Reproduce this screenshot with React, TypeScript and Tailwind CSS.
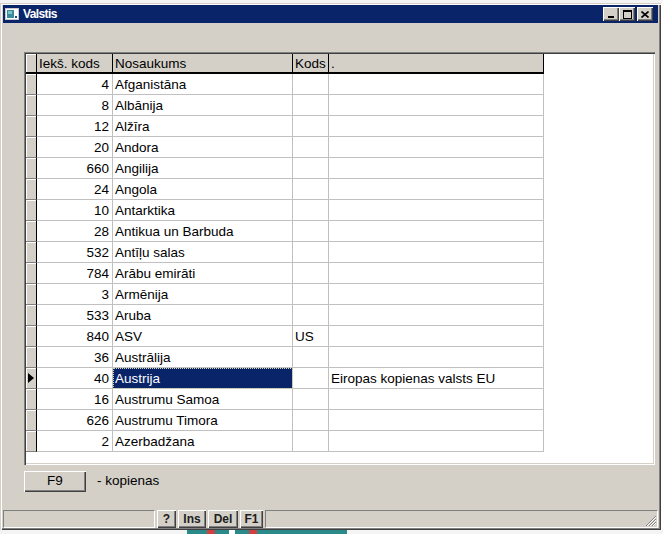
import React from 'react';

type Row = { id: string; name: string; code: string; note: string };

const rows: Row[] = [
  { id: '4', name: 'Afganistāna', code: '', note: '' },
  { id: '8', name: 'Albānija', code: '', note: '' },
  { id: '12', name: 'Alžīra', code: '', note: '' },
  { id: '20', name: 'Andora', code: '', note: '' },
  { id: '660', name: 'Angilija', code: '', note: '' },
  { id: '24', name: 'Angola', code: '', note: '' },
  { id: '10', name: 'Antarktika', code: '', note: '' },
  { id: '28', name: 'Antikua un Barbuda', code: '', note: '' },
  { id: '532', name: 'Antīļu salas', code: '', note: '' },
  { id: '784', name: 'Arābu emirāti', code: '', note: '' },
  { id: '3', name: 'Armēnija', code: '', note: '' },
  { id: '533', name: 'Aruba', code: '', note: '' },
  { id: '840', name: 'ASV', code: 'US', note: '' },
  { id: '36', name: 'Austrālija', code: '', note: '' },
  { id: '40', name: 'Austrija', code: '', note: 'Eiropas kopienas valsts EU' },
  { id: '16', name: 'Austrumu Samoa', code: '', note: '' },
  { id: '626', name: 'Austrumu Timora', code: '', note: '' },
  { id: '2', name: 'Azerbadžana', code: '', note: '' },
];

const SELECTED = 14;

const raised =
  'bg-[#d4d0c8] shadow-[inset_1px_1px_0_#ffffff,inset_-1px_-1px_0_#404040,inset_-2px_-2px_0_#808080]';

function TitleButton({ children, className = '' }: { children: React.ReactNode; className?: string }) {
  return (
    <div className={`w-[16px] h-[14px] flex items-center justify-center ${raised} ${className}`}>
      {children}
    </div>
  );
}

function StatusButton({ label, w }: { label: string; w: string }) {
  return (
    <div className={`${w} h-[18px] flex items-center justify-center text-[12px] font-bold text-[#202020] ${raised}`}>
      {label}
    </div>
  );
}

export default function App() {
  return (
    <div className="w-[663px] h-[534px] overflow-hidden bg-white font-['Liberation_Sans',Arial,sans-serif] text-[13.5px] text-black flex flex-col">
      {/* desktop behind the window */}
      <div className="h-[3px] shrink-0 bg-[#f4f4f4]" />

      {/* window */}
      <div className="w-[661px] h-[527px] shrink-0 bg-[#d4d0c8] flex flex-col pt-[2px] px-[3px] pb-[2px] shadow-[inset_1px_1px_0_#d4d0c8,inset_2px_2px_0_#ffffff,inset_-1px_-1px_0_#404040,inset_-2px_-2px_0_#808080]">
        {/* title bar */}
        <div className="h-[18px] shrink-0 bg-[#0a246a] flex items-center pl-[1px] pr-[5px]">
          <svg width="14" height="12" viewBox="0 0 14 12" className="ml-[1px]">
            <rect x="0" y="0" width="14" height="12" fill="#c8c8c8" />
            <rect x="1" y="1" width="12" height="10" fill="#ffffff" />
            <rect x="2" y="2" width="7" height="8" fill="#3a8c9c" />
            <rect x="3" y="3" width="4" height="3" fill="#7cc4c8" />
            <rect x="10" y="2" width="2" height="5" fill="#ffffff" />
            <rect x="10" y="8" width="2" height="2" fill="#1a4a8a" />
          </svg>
          <span className="ml-[4px] text-white font-bold text-[12px] tracking-[-0.6px] leading-none">Valstis</span>
          <div className="ml-auto flex items-center">
            <TitleButton>
              <svg width="8" height="8" viewBox="0 0 8 8">
                <rect x="1" y="6" width="6" height="2" fill="#000" />
              </svg>
            </TitleButton>
            <TitleButton>
              <svg width="9" height="9" viewBox="0 0 9 9">
                <rect x="0.5" y="0.5" width="8" height="8" fill="none" stroke="#000" />
                <rect x="0" y="0" width="9" height="2" fill="#000" />
              </svg>
            </TitleButton>
            <TitleButton className="ml-[2px]">
              <svg width="8" height="7" viewBox="0 0 8 7">
                <path d="M0.5 0.5 L7.5 6.5 M7.5 0.5 L0.5 6.5" stroke="#000" strokeWidth="1.6" />
              </svg>
            </TitleButton>
          </div>
        </div>

        {/* client area */}
        <div className="flex-1 flex flex-col">
          {/* grid */}
          <div className="mt-[29px] ml-[21px] mr-[3px] h-[413px] p-[2px] bg-white shadow-[inset_1px_1px_0_#808080,inset_2px_2px_0_#404040,inset_-1px_-1px_0_#ffffff,inset_-2px_-2px_0_#d4d0c8]">
            {/* header */}
            <div className="flex h-[20px]">
              <div className="w-[11px] h-full bg-[#d4d0c8] border-r border-b-2 border-black shadow-[inset_1px_1px_0_#ffffff]" />
              <div className="w-[76px] h-full bg-[#d4d0c8] border-r border-b-2 border-black pl-[2px] leading-[20px]">Iekš. kods</div>
              <div className="w-[180px] h-full bg-[#d4d0c8] border-r border-b-2 border-black pl-[2px] leading-[20px]">Nosaukums</div>
              <div className="w-[36px] h-full bg-[#d4d0c8] border-r border-b-2 border-black pl-[2px] leading-[20px]">Kods</div>
              <div className="w-[215px] h-full bg-[#d4d0c8] border-r border-b-2 border-black pl-[2px] leading-[20px]">.</div>
            </div>

            {/* rows */}
            {rows.map((r, i) => (
              <div key={r.id + r.name} className="flex h-[21px]">
                <div className="w-[11px] h-full bg-[#d4d0c8] border-r border-black border-b border-b-[#808080] shadow-[inset_1px_1px_0_#ffffff] flex items-center justify-center">
                  {i === SELECTED && (
                    <svg width="6" height="10" viewBox="0 0 6 10">
                      <polygon points="0,0 6,5 0,10" fill="#000" />
                    </svg>
                  )}
                </div>
                <div className="w-[76px] h-full border-r border-b border-[#c0c0c0] text-right pr-[3px] leading-[22px]">{r.id}</div>
                <div
                  className={`w-[180px] h-full border-r border-b border-[#c0c0c0] pl-[2px] leading-[22px] ${
                    i === SELECTED ? 'bg-[#0a246a] text-white outline-1 outline-dotted outline-[#d8d8b0] -outline-offset-1' : ''
                  }`}
                >
                  {r.name}
                </div>
                <div className="w-[36px] h-full border-r border-b border-[#c0c0c0] pl-[2px] leading-[22px]">{r.code}</div>
                <div className="w-[215px] h-full border-r border-b border-[#c0c0c0] pl-[2px] leading-[22px]">{r.note}</div>
              </div>
            ))}
          </div>

          {/* F9 row */}
          <div className="mt-[6px] ml-[21px] flex items-center">
            <div className={`w-[62px] h-[21px] flex items-center justify-center ${raised}`}>F9</div>
            <span className="ml-[11px]">- kopienas</span>
          </div>

          {/* status bar */}
          <div className="mt-auto h-[18px] flex">
            <div className="w-[152px] h-full border-t border-l border-[#808080] border-b border-r border-b-white border-r-white" />
            <div className="ml-[2px] flex gap-[2px]">
              <StatusButton label="?" w="w-[19px]" />
              <StatusButton label="Ins" w="w-[28px]" />
              <StatusButton label="Del" w="w-[30px]" />
              <StatusButton label="F1" w="w-[23px]" />
            </div>
            <div className="ml-[2px] flex-1 h-full border-t border-l border-[#808080] border-b border-r border-b-white border-r-white flex items-end justify-end">
              <svg width="12" height="12" viewBox="0 0 12 12">
                <path d="M11 1 L1 11 M11 4 L4 11 M11 7 L7 11" stroke="#808080" strokeWidth="1" />
                <path d="M11 2 L2 11 M11 5 L5 11 M11 8 L8 11" stroke="#ffffff" strokeWidth="1" />
              </svg>
            </div>
          </div>
        </div>
      </div>

      {/* desktop below */}
      <div className="flex-1 flex">
        <div className="w-[187px] bg-[#f4f4f4]" />
        <div className="w-[160px] bg-[#2a8a8a] flex items-start gap-[14px] pl-[20px]">
          <div className="w-[8px] h-[4px] bg-[#d04040]" />
          <div className="w-[6px] h-[4px] bg-white" />
          <div className="w-[8px] h-[4px] bg-[#d04040]" />
        </div>
        <div className="flex-1 bg-[#f4f4f4]" />
      </div>
    </div>
  );
}
